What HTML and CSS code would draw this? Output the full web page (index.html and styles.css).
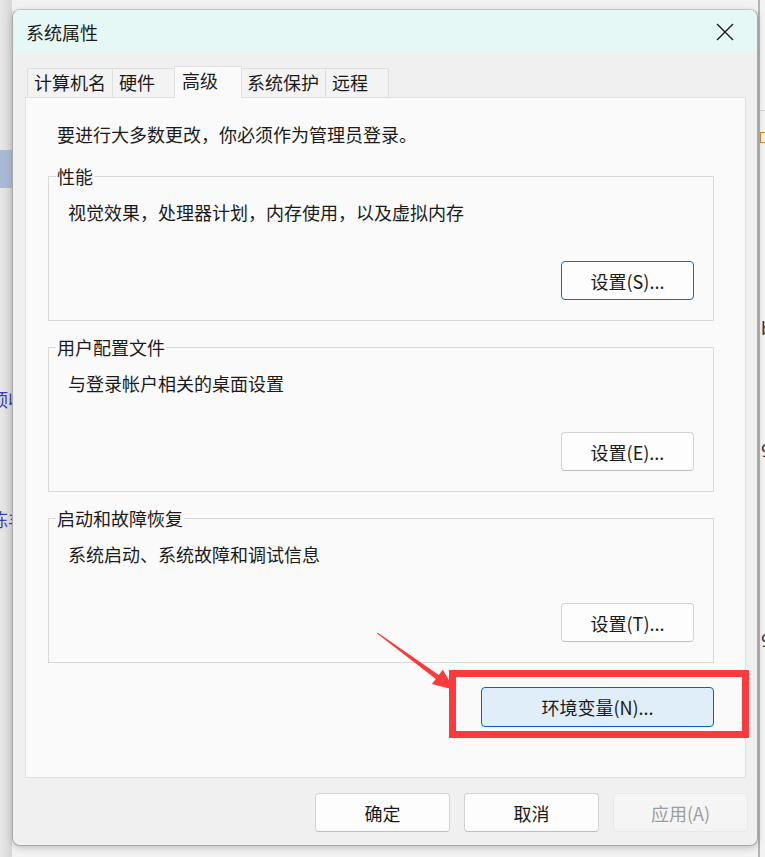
FILE: index.html
```html
<!DOCTYPE html>
<html lang="zh-CN">

<head>
  <meta charset="UTF-8" />
  <meta name="viewport" content="width=device-width, initial-scale=1.0" />
  <title>系统属性</title>
  <link rel="stylesheet" href="styles.css">
</head>

<body>

  <!-- window behind the dialog -->
  <div class="back-left">
    <div class="back-sel"></div>
    <span class="frag frag-a">顶收</span>
    <span class="frag frag-b">陈羊</span>
  </div>
  <div class="back-right">
    <div class="back-line"></div>
    <span class="back-icon"></span>
    <span class="frag-r frag-c">b</span>
    <span class="frag-r frag-d">9</span>
    <span class="frag-r frag-e">9</span>
  </div>

  <div class="dialog">
    <div class="titlebar">
      <span class="title">系统属性</span>
      <button class="close-btn" aria-label="关闭">
        <svg width="18" height="18" viewBox="0 0 18 18">
          <path d="M1 1 L17 17 M17 1 L1 17" stroke="#1a1a1a" stroke-width="1.4" fill="none" />
        </svg>
      </button>
    </div>

    <div class="dialog-body">
      <div class="tabs">
        <div class="tab">计算机名</div>
        <div class="tab">硬件</div>
        <div class="tab active">高级</div>
        <div class="tab">系统保护</div>
        <div class="tab">远程</div>
      </div>

      <div class="panel">
        <p class="intro">要进行大多数更改，你必须作为管理员登录。</p>

        <div class="group">
          <span class="group-title">性能</span>
          <p class="group-desc">视觉效果，处理器计划，内存使用，以及虚拟内存</p>
          <div class="group-actions">
            <button class="btn btn-set focused">设置(S)...</button>
          </div>
        </div>

        <div class="group">
          <span class="group-title">用户配置文件</span>
          <p class="group-desc">与登录帐户相关的桌面设置</p>
          <div class="group-actions">
            <button class="btn btn-set">设置(E)...</button>
          </div>
        </div>

        <div class="group">
          <span class="group-title">启动和故障恢复</span>
          <p class="group-desc">系统启动、系统故障和调试信息</p>
          <div class="group-actions">
            <button class="btn btn-set">设置(T)...</button>
          </div>
        </div>

        <div class="env-row">
          <button class="btn btn-env">环境变量(N)...</button>
        </div>
      </div>

      <div class="footer">
        <button class="btn btn-footer">确定</button>
        <button class="btn btn-footer">取消</button>
        <button class="btn btn-footer" disabled>应用(A)</button>
      </div>
    </div>
  </div>

  <!-- red highlight drawn over the screenshot -->
  <svg class="annotation" width="765" height="857" viewBox="0 0 765 857">
    <rect x="452.5" y="673.5" width="293" height="61" fill="none" stroke="#fb3b3b" stroke-width="7" />
    <polygon points="377.5,632.5 438.8,674.9 442.7,669.7 455,690 431.9,684.1 435.8,678.9 377,633.5" fill="#fb3b3b" />
  </svg>

</body>

</html>
```

FILE: styles.css
```css
:root {
  --title-bg: #e6f8f5;
  --dialog-bg: #f0f0f0;
  --panel-bg: #fafafa;
  --panel-border: #e0e0e0;
  --group-border: #d9d9d9;
  --text-color: #1a1a1a;
  --accent: #0f6cbd;
}

body {
  font-family: "Noto Sans CJK SC", "Noto Sans", sans-serif;
  font-size: 18px;
  margin: 0;
  background-color: #f2f2f2;
  color: var(--text-color);
  position: relative;
  width: 765px;
  height: 857px;
  overflow: hidden;
}

p {
  margin: 0;
}

/* background window */
.back-left {
  position: absolute;
  left: 0;
  top: 0;
  width: 12px;
  height: 857px;
  background: linear-gradient(to right, #e8e8e8, #d6d6d6);
  overflow: hidden;
}

.back-sel {
  position: absolute;
  top: 150px;
  left: 0;
  width: 12px;
  height: 38px;
  background-color: #aab9d3;
}

.frag {
  position: absolute;
  left: -10px;
  color: #3b3ba8;
  font-size: 18px;
  line-height: 20px;
  white-space: nowrap;
}

.frag-a {
  top: 389px;
}

.frag-b {
  top: 509px;
}

.back-right {
  position: absolute;
  left: 758px;
  top: 0;
  width: 7px;
  height: 857px;
  background-color: #f3f3f3;
  border-left: 2px solid #b4b4b4;
  overflow: hidden;
}

.back-line {
  position: absolute;
  top: 110px;
  left: 0;
  width: 7px;
  height: 1px;
  background-color: #d0d0d0;
}

.back-icon {
  position: absolute;
  top: 132px;
  left: 0;
  width: 5px;
  height: 9px;
  border: 1px solid #d08a2c;
}

.frag-r {
  position: absolute;
  left: 1px;
  font-family: "Noto Sans", sans-serif;
  font-size: 18px;
  line-height: 20px;
  color: #2d3a4a;
}

.frag-c {
  top: 318px;
}

.frag-d {
  top: 440px;
}

.frag-e {
  top: 630px;
}

/* dialog */
.dialog {
  position: relative;
  margin: 9px 0 0 12px;
  width: 746px;
  height: 837px;
  box-sizing: border-box;
  border: 1px solid #a9a9a9;
  border-top-color: #c4c4c4;
  border-radius: 8px;
  background-color: var(--dialog-bg);
  box-shadow: 0 2px 6px rgba(0, 0, 0, 0.2);
  overflow: hidden;
}

.titlebar {
  height: 43px;
  background-color: var(--title-bg);
  display: flex;
  align-items: center;
  justify-content: space-between;
  padding-left: 13px;
}

.title {
  line-height: 24px;
}

.close-btn {
  width: 46px;
  height: 43px;
  margin-right: 9px;
  border: none;
  background: none;
  padding: 0;
  display: flex;
  align-items: center;
  justify-content: center;
}

.dialog-body {
  padding: 13px 0 0 0;
}

.tabs {
  display: flex;
  align-items: flex-end;
  height: 31px;
  padding-left: 14px;
}

.tab {
  box-sizing: border-box;
  height: 29px;
  min-width: 64px;
  padding: 0 6px;
  line-height: 26px;
  border: 1px solid #dedede;
  border-bottom: none;
  background-color: #f3f3f3;
  margin-left: -1px;
}

.tab:first-child {
  margin-left: 0;
}

.tab.active {
  height: 32px;
  min-width: 68px;
  padding: 0 7px;
  line-height: 26px;
  margin: 0 -1px -1px -2px;
  background-color: var(--panel-bg);
  border-color: #e0e0e0;
  position: relative;
  z-index: 1;
}

.panel {
  box-sizing: border-box;
  margin-left: 12px;
  width: 721px;
  height: 681px;
  background-color: var(--panel-bg);
  border: 1px solid var(--panel-border);
  padding: 24px 0 0 22px;
}

.intro {
  line-height: 24px;
  margin-left: 9px;
}

.group {
  position: relative;
  box-sizing: border-box;
  width: 666px;
  height: 145px;
  margin-top: 26px;
  border: 1px solid var(--group-border);
  padding: 23px 19px 20px 19px;
}

.intro + .group {
  margin-top: 30px;
}

.group-title {
  position: absolute;
  top: -13px;
  left: 7px;
  padding: 0 1px;
  line-height: 24px;
  background-color: var(--panel-bg);
}

.group-desc {
  line-height: 24px;
}

.group-actions {
  display: flex;
  justify-content: flex-end;
  margin-top: 37px;
}

.btn {
  font-family: "Noto Sans CJK SC", "Noto Sans", sans-serif;
  font-size: 18px;
  color: var(--text-color);
  background-color: #fdfdfd;
  border: 1px solid #d2d2d2;
  border-bottom-color: #bcbcbc;
  border-radius: 4px;
  padding: 0;
  box-sizing: border-box;
  line-height: 24px;
}

.btn-set {
  width: 133px;
  height: 39px;
}

.btn.focused {
  border: 1px solid var(--accent);
}

.env-row {
  display: flex;
  width: 666px;
  justify-content: flex-end;
  margin-top: 24px;
}

.btn-env {
  width: 233px;
  height: 40px;
  background-color: #e0eef9;
  border: 1px solid #0067c0;
}

.footer {
  display: flex;
  justify-content: flex-end;
  gap: 14px;
  margin-top: 15px;
  padding-right: 9px;
}

.btn-footer {
  width: 135px;
  height: 39px;
}

.btn-footer:disabled {
  background-color: #f5f5f5;
  border-color: #e8e8e8;
  color: #9d9d9d;
}

.annotation {
  position: absolute;
  left: 0;
  top: 0;
  pointer-events: none;
}
```
